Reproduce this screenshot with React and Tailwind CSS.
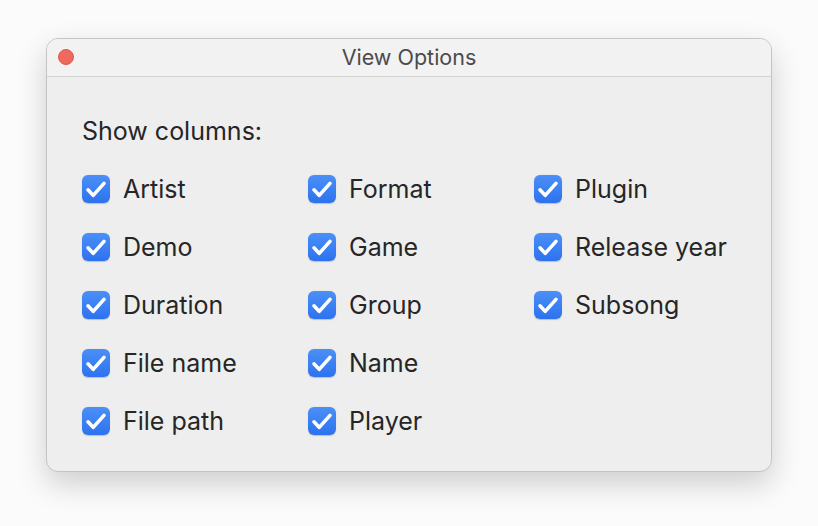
const columns = [
  ['Artist', 'Demo', 'Duration', 'File name', 'File path'],
  ['Format', 'Game', 'Group', 'Name', 'Player'],
  ['Plugin', 'Release year', 'Subsong'],
]

function Check() {
  return (
    <span className="relative h-[28px] w-[28px] shrink-0 rounded-[6px] bg-gradient-to-b from-[#4b8ff9] to-[#2d72ee] shadow-[0_0.5px_1px_rgba(0,0,0,0.2)]">
      <svg className="absolute inset-0" width="28" height="28" viewBox="0 0 28 28" fill="none">
        <path d="M6 14.8 L11.2 20.4 L22 8.4" stroke="white" strokeWidth="3.6" strokeLinecap="round" strokeLinejoin="round" />
      </svg>
    </span>
  )
}

function Option({ label }) {
  return (
    <label className="flex h-[28px] items-center gap-[13px]">
      <Check />
      <span className="text-[25px] leading-none text-[#262626]">{label}</span>
    </label>
  )
}

export default function App() {
  return (
    <div className="min-h-[526px] w-[818px] bg-[#fbfbfb] pl-[46px] pt-[38px] font-['Inter','Liberation_Sans',sans-serif]">
      <div className="flex h-[434px] w-[726px] flex-col overflow-hidden rounded-[12px] border border-[#c4c4c4] bg-[#eeeeee] shadow-[0_12px_30px_rgba(0,0,0,0.18)]">
        <div className="relative flex h-[38px] shrink-0 items-center justify-center border-b border-[#d2d2d2] bg-[#f2f2f2]">
          <span className="absolute left-[11px] top-[10px] h-[16px] w-[16px] rounded-full border border-[#e2574c] bg-[#ee6a5f]" />
          <span className="text-[21.5px] text-[#4b4b4b]">View Options</span>
        </div>
        <div className="flex flex-col pl-[35px] pt-[42px]">
          <div className="text-[25px] leading-none text-[#262626]">Show columns:</div>
          <div className="mt-[31px] flex">
            {columns.map((col, i) => (
              <div key={i} className="flex w-[226px] flex-col gap-[30px]">
                {col.map((label) => (
                  <Option key={label} label={label} />
                ))}
              </div>
            ))}
          </div>
        </div>
      </div>
    </div>
  )
}
